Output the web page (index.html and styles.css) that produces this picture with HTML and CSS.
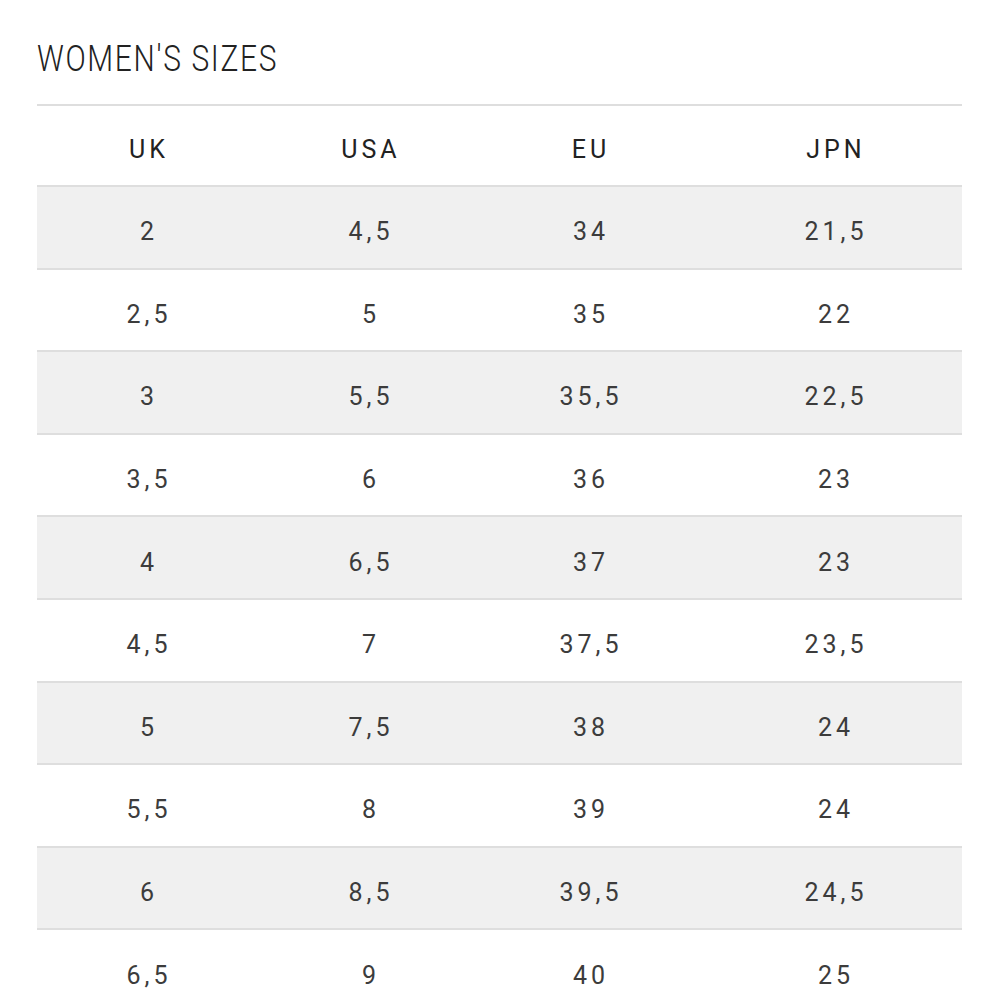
FILE: index.html
```html
<!DOCTYPE html>
<html lang="en">
<head>
  <meta charset="UTF-8">
  <title>Women's Sizes</title>
  <link rel="stylesheet" href="styles.css">
</head>
<body>
  <div class="page">
    <h1 class="title"><span>WOMEN'S SIZES</span></h1>
    <div class="size-table">
      <div class="row head">
        <div>UK</div><div>USA</div><div>EU</div><div>JPN</div>
      </div>
      <div class="row alt"><div>2</div><div>4,5</div><div>34</div><div>21,5</div></div>
      <div class="row"><div>2,5</div><div>5</div><div>35</div><div>22</div></div>
      <div class="row alt"><div>3</div><div>5,5</div><div>35,5</div><div>22,5</div></div>
      <div class="row"><div>3,5</div><div>6</div><div>36</div><div>23</div></div>
      <div class="row alt"><div>4</div><div>6,5</div><div>37</div><div>23</div></div>
      <div class="row"><div>4,5</div><div>7</div><div>37,5</div><div>23,5</div></div>
      <div class="row alt"><div>5</div><div>7,5</div><div>38</div><div>24</div></div>
      <div class="row"><div>5,5</div><div>8</div><div>39</div><div>24</div></div>
      <div class="row alt"><div>6</div><div>8,5</div><div>39,5</div><div>24,5</div></div>
      <div class="row"><div>6,5</div><div>9</div><div>40</div><div>25</div></div>
    </div>
  </div>
</body>
</html>
```

FILE: styles.css
```css
body {
  margin: 0;
  background: #fff;
  font-family: 'Roboto', 'Liberation Sans', sans-serif;
  color: #3c3c3c;
}
.page {
  padding: 0 38px 0 37px;
}
.title {
  margin: 0;
  padding-top: 41px;
  height: 104px;
  box-sizing: border-box;
  font-size: 36px;
  font-weight: 300;
  line-height: 36px;
  color: #222;
  letter-spacing: 2px;
}
.title span {
  display: inline-block;
  transform: scaleX(0.83);
  transform-origin: left center;
}
.size-table {
  border-top: 2px solid #dedede;
}
.row {
  display: grid;
  grid-template-columns: 220px 224px 216px 1fr;
  height: 82.6px;
  box-sizing: border-box;
  padding-top: 9px;
  align-items: center;
  border-bottom: 2px solid #dedede;
  font-size: 25px;
  letter-spacing: 4px;
}
.row > div {
  text-align: center;
  padding-left: 4px;
}
.row > div:last-child {
  padding-left: 13px;
}
.row.alt {
  background: #f0f0f0;
}
.row.head {
  height: 81px;
  padding-top: 7px;
  color: #222;
}
```
